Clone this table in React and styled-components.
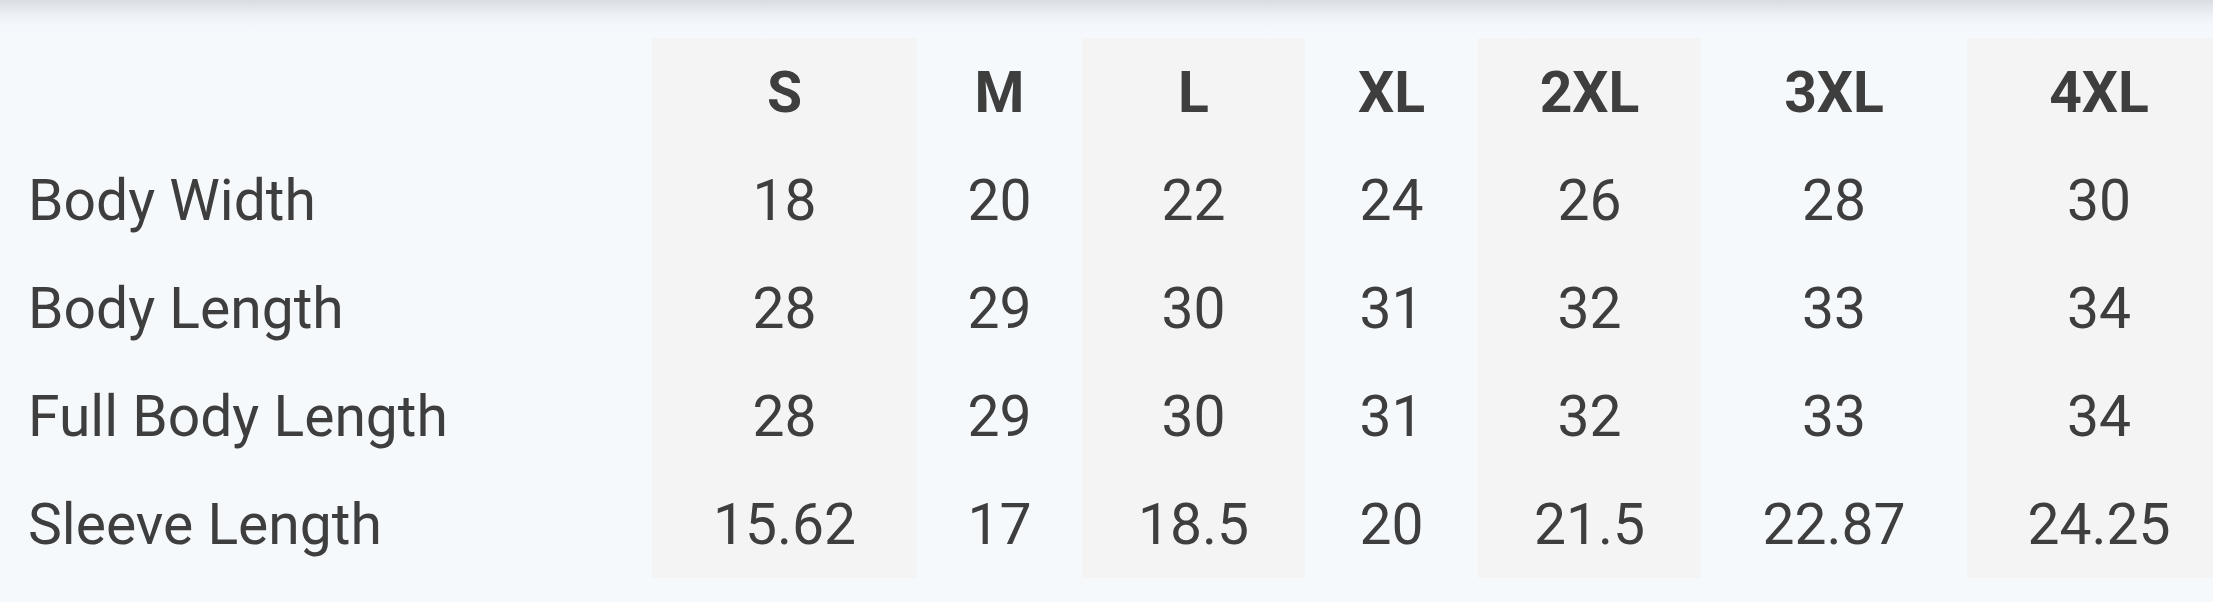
import React from "react";
import styled, { createGlobalStyle } from "styled-components";

const sizes = ["S", "M", "L", "XL", "2XL", "3XL", "4XL"];
const widths = [265, 165, 223, 173, 223, 266, 264];

const rows = [
  { label: "Body Width", values: ["18", "20", "22", "24", "26", "28", "30"] },
  { label: "Body Length", values: ["28", "29", "30", "31", "32", "33", "34"] },
  { label: "Full Body Length", values: ["28", "29", "30", "31", "32", "33", "34"] },
  { label: "Sleeve Length", values: ["15.62", "17", "18.5", "20", "21.5", "22.87", "24.25"] },
];

const GlobalStyle = createGlobalStyle`
  html, body {
    margin: 0;
    padding: 0;
    overflow: hidden;
    background: #f6f9fc;
  }
  body {
    font-family: Roboto, "Liberation Sans", sans-serif;
  }
`;

const Page = styled.div`
  width: 2213px;
  height: 602px;
  background: #f6f9fc;
  overflow: hidden;
`;

const HeaderShadow = styled.div`
  height: 38px;
  background: linear-gradient(
    to bottom,
    #d9dce0 0px,
    #e4e7eb 8px,
    #eef1f5 16px,
    #f4f7fb 26px,
    #f6f9fc 38px
  );
`;

const Table = styled.table`
  border-collapse: collapse;
  border-spacing: 0;
  table-layout: fixed;
  width: 2231px;
  color: #3e3e3e;
`;

const Col = styled.col`
  width: ${(p) => p.$width}px;
`;

const HeadCell = styled.th`
  height: 108px;
  padding: 0;
  text-align: center;
  vertical-align: middle;
  font-size: 57px;
  font-weight: 700;
  background: ${(p) => (p.$shaded ? "#f4f4f4" : "transparent")};
`;

const Label = styled.td`
  height: 108px;
  padding: 0 0 0 28px;
  text-align: left;
  vertical-align: middle;
  font-size: 57px;
  font-weight: 400;
  white-space: nowrap;
`;

const Cell = styled.td`
  height: 108px;
  padding: 0;
  text-align: center;
  vertical-align: middle;
  font-size: 57px;
  font-weight: 400;
  background: ${(p) => (p.$shaded ? "#f4f4f4" : "transparent")};
`;

const App = () => {
  return (
    <>
      <GlobalStyle />
      <Page>
        <HeaderShadow />
        <Table>
          <colgroup>
            <Col $width={652} />
            {widths.map((w, i) => (
              <Col key={i} $width={w} />
            ))}
          </colgroup>
          <thead>
            <tr>
              <th />
              {sizes.map((s, i) => (
                <HeadCell key={s} $shaded={i % 2 === 0}>
                  {s}
                </HeadCell>
              ))}
            </tr>
          </thead>
          <tbody>
            {rows.map((row) => (
              <tr key={row.label}>
                <Label>{row.label}</Label>
                {row.values.map((v, i) => (
                  <Cell key={i} $shaded={i % 2 === 0}>
                    {v}
                  </Cell>
                ))}
              </tr>
            ))}
          </tbody>
        </Table>
      </Page>
    </>
  );
};

export default App;
